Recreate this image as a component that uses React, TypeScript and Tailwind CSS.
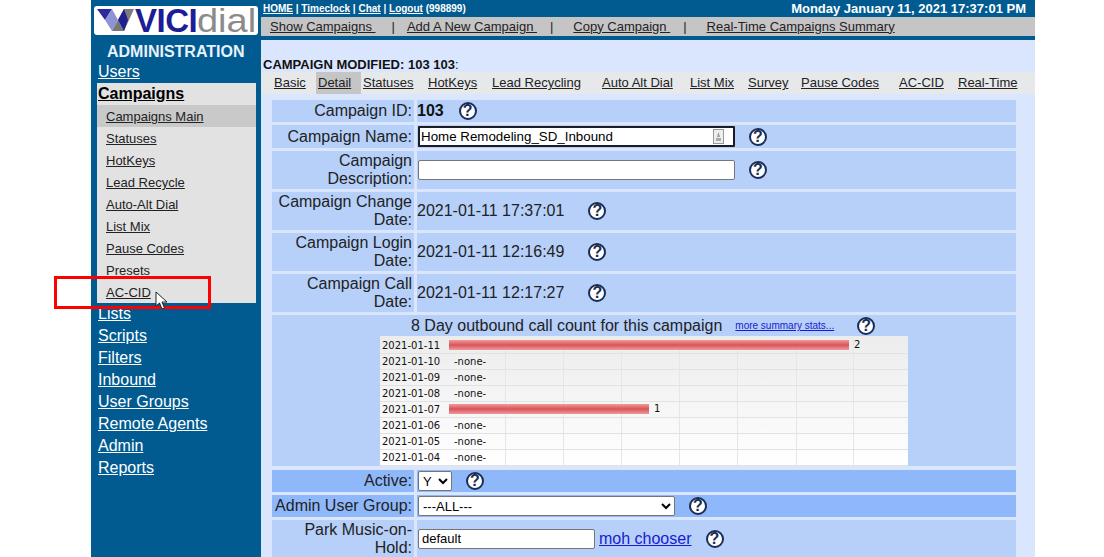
import React from "react";

const sans = "font-['Liberation_Sans',Arial,sans-serif]";

function Help({ className = "" }: { className?: string }) {
  return (
    <span className={`inline-flex h-[18px] w-[18px] shrink-0 items-center justify-center rounded-full border-2 border-[#1b2d55] bg-white text-[16px] font-bold leading-none text-[#1b2d55] ${className}`}>?</span>
  );
}

function Row({ label, h, dark, children }: { label: React.ReactNode; h: number; dark?: boolean; children: React.ReactNode }) {
  const bg = dark ? "bg-[#8fb8fa]" : "bg-[#b6d0fa]";
  return (
    <div className={`flex ${h === 38 ? "h-[38px]" : h === 23 ? "h-[23px]" : "h-[22px]"} gap-[3px]`}>
      <div className={`${bg} flex w-[142px] shrink-0 items-center justify-end text-right text-[16px] leading-[18px] text-[#222] pr-[2px]`}>
        <span>{label}</span>
      </div>
      <div className={`${bg} flex flex-1 items-center text-[16px]`}>{children}</div>
    </div>
  );
}

const side = ["Campaigns Main", "Statuses", "HotKeys", "Lead Recycle", "Auto-Alt Dial", "List Mix", "Pause Codes", "Presets", "AC-CID"];
const after = ["Lists", "Scripts", "Filters", "Inbound", "User Groups", "Remote Agents", "Admin", "Reports"];

const chart: { d: string; bar?: "full" | "half"; n?: number }[] = [
  { d: "2021-01-11", bar: "full", n: 2 },
  { d: "2021-01-10" },
  { d: "2021-01-09" },
  { d: "2021-01-08" },
  { d: "2021-01-07", bar: "half", n: 1 },
  { d: "2021-01-06" },
  { d: "2021-01-05" },
  { d: "2021-01-04" },
];

const tabs: { t: string; c: string }[] = [
  { t: "Basic", c: "ml-[13px] w-[32px]" },
  { t: "Detail", c: "ml-[10px] w-[45px] bg-[#c5c5c5] pl-[2px]" },
  { t: "Statuses", c: "ml-[2px] w-[50px]" },
  { t: "HotKeys", c: "ml-[15px] w-[49px]" },
  { t: "Lead Recycling", c: "ml-[15px] w-[89px]" },
  { t: "Auto Alt Dial", c: "ml-[21px] w-[71px]" },
  { t: "List Mix", c: "ml-[17px] w-[43px]" },
  { t: "Survey", c: "ml-[15px] w-[40px]" },
  { t: "Pause Codes", c: "ml-[13px] w-[77px]" },
  { t: "AC-CID", c: "ml-[21px] w-[45px]" },
  { t: "Real-Time", c: "ml-[14px] w-[59px]" },
];

export default function App() {
  return (
    <div className={`relative flex h-[557px] w-[1104px] overflow-hidden bg-white ${sans}`}>
      <div className="w-[91px] shrink-0" />
      {/* Sidebar */}
      <aside className="w-[170px] shrink-0 bg-[#015b91]">
        <div className="ml-[3px] mt-[6px] flex h-[29px] w-[164px] items-center rounded-[3px] bg-white">
          <svg width="41" height="29" viewBox="0 0 41 29" className="shrink-0">
            <polygon points="3,3 18,3 11,14" fill="#2a2a9c" />
            <polygon points="11,14 18,3 24,14 18,25" fill="#8d94d6" />
            <polygon points="18,25 24,14 30,25" fill="#777" />
            <polygon points="24,14 30,3 40,3 30,25" fill="#7d7d7d" />
            <polygon points="24,14 30,3 34,14 30,25" fill="#1f1f8e" />
          </svg>
          <span className="text-[33px] font-bold leading-[29px] tracking-[-0.5px] text-[#1d1d96]">VICI</span>
          <span className="inline-block origin-left scale-x-[1.15] text-[33px] leading-[29px] text-[#8b8b8b]">dial</span>
        </div>
        <div className="mt-[8px] pl-[16px] text-[16px] font-bold leading-[18px] text-[#e8f2fb]">ADMINISTRATION</div>
        <a className="block h-[22px] pl-[7px] text-[16px] leading-[22px] text-white underline">Users</a>
        <div className="ml-[6px] w-[159px] bg-[#e2e2e2]">
          <div className="h-[22px] pl-px text-[16px] font-bold leading-[22px] text-black underline">Campaigns</div>
          {side.map((s, i) => (
            <div key={s} className={`h-[22px] pl-[9px] text-[13px] leading-[24px] text-[#222] ${i === 0 ? "bg-[#c9c9c9]" : ""} ${s === "Presets" ? "" : "underline"}`}>{s}</div>
          ))}
        </div>
        {after.map((s) => (
          <a key={s} className="block h-[22px] pl-[7px] text-[16px] leading-[22px] text-white underline">{s}</a>
        ))}
      </aside>

      {/* Main */}
      <main className="w-[774px] shrink-0 bg-[#d9e6fe]">
        <div className="flex h-[17px] items-center justify-between bg-[#015b91] pl-[2px] pr-[9px] text-white">
          <div className="text-[10px] font-bold">
            <span className="underline">HOME</span> | <span className="underline">Timeclock</span> | <span className="underline">Chat</span> | <span className="underline">Logout</span> (998899)
          </div>
          <div className="text-[13px] font-bold">Monday January 11, 2021 17:37:01 PM</div>
        </div>
        <div className="flex h-[19px] items-center whitespace-pre bg-[#c5c5c5] pl-[9px] text-[13px] text-[#222]">
          <span className="underline">Show Campaigns </span>
          <span className="ml-[16px]">|</span>
          <span className="ml-[12px] underline">Add A New Campaign </span>
          <span className="ml-[13px]">|</span>
          <span className="ml-[20px] underline">Copy Campaign </span>
          <span className="ml-[13px]">|</span>
          <span className="ml-[20px] underline">Real-Time Campaigns Summary</span>
        </div>
        <div className="h-[4px] bg-[#015b91]" />
        <div className="mt-[17px] h-[15px] pl-[2px] text-[13px] font-bold leading-[15px] text-[#111]">
          CAMPAIGN MODIFIED: 103 103<span className="font-normal">:</span>
        </div>
        <div className="flex h-[22px] items-center whitespace-nowrap bg-[#e6e8ea] text-[13px] leading-[22px] text-[#222] underline">
          {tabs.map((t) => (
            <span key={t.t} className={`h-[22px] shrink-0 ${t.c}`}>{t.t}</span>
          ))}
        </div>

        <div className="ml-[11px] mt-[6px] flex w-[744px] flex-col gap-[3px] text-[#222]">
          <Row label="Campaign ID:" h={22}>
            <b className="text-[16px] text-[#111]">103</b>
            <Help className="ml-[15px]" />
          </Row>
          <Row label="Campaign Name:" h={23}>
            <div className="ml-px flex h-[21px] w-[317px] items-center rounded-[1px] border-2 border-[#1c1c24] bg-white pl-px pr-[9px] text-[13.33px] text-black">
              <span className="flex-1">Home Remodeling_SD_Inbound</span>
              <svg width="11" height="15" viewBox="0 0 11 15">
                <rect x="0.5" y="0.5" width="10" height="14" fill="#eee" stroke="#999" />
                <polygon points="5.5,3 7,8 4,8" fill="#999" />
                <rect x="3" y="9" width="5" height="3" fill="#aaa" />
              </svg>
            </div>
            <Help className="ml-[14px]" />
          </Row>
          <Row label={<>Campaign<br />Description:</>} h={38}>
            <input readOnly className="ml-px h-[20px] w-[317px] rounded-[2px] border border-[#767676] bg-white" />
            <Help className="ml-[14px]" />
          </Row>
          <Row label={<>Campaign Change<br />Date:</>} h={38}>
            2021-01-11 17:37:01
            <Help className="ml-[24px]" />
          </Row>
          <Row label={<>Campaign Login<br />Date:</>} h={38}>
            2021-01-11 12:16:49
            <Help className="ml-[24px]" />
          </Row>
          <Row label={<>Campaign Call<br />Date:</>} h={38}>
            2021-01-11 12:17:27
            <Help className="ml-[24px]" />
          </Row>

          {/* Chart block */}
          <div className="flex h-[151px] flex-col items-start bg-[#b6d0fa]">
            <div className="flex h-[21px] items-center pl-[139px]">
              <span className="text-[16px] text-[#222]">8 Day outbound call count for this campaign</span>
              <a className="ml-[13px] text-[10px] text-[#1a1ad0] underline">more summary stats...</a>
              <Help className="ml-[23px]" />
            </div>
            <div className="ml-[108px] w-[528px] bg-gradient-to-b from-[#ececec] to-white pt-[2px] font-['DejaVu_Sans',sans-serif] text-[10px] text-[#111]">
              {chart.map((r) => (
                <div key={r.d} className="relative flex h-[16px] items-center border-b border-[#e2e2e2]">
                  <span className="w-[67px] shrink-0 pl-[2px]">{r.d}</span>
                  <div className="flex h-full flex-1">
                    {[59, 58, 58, 58, 58, 59, 57, 54].map((w, i) => (
                      <div key={i} style={{ width: w }} className="h-full border-r border-[#e6e6e6] last:border-r-0" />
                    ))}
                  </div>
                  {r.bar ? (
                    <div className="absolute left-[69px] top-[2px] flex items-center">
                      <div className={`h-[10px] ${r.bar === "full" ? "w-[400px]" : "w-[200px]"} bg-gradient-to-b from-[#ef9a9a] via-[#d9525a] to-[#ef9a9a]`} />
                      <span className="ml-[5px] leading-[10px]">{r.n}</span>
                    </div>
                  ) : (
                    <span className="absolute left-[74px] top-[1px] leading-[14px]">-none-</span>
                  )}
                </div>
              ))}
            </div>
          </div>

          <div className="mt-px">
            <Row label="Active:" h={22} dark>
              <select className="ml-px h-[20px] w-[34px] rounded-[2px] border border-[#767676] bg-white text-[13px] text-black">
                <option>Y</option>
              </select>
              <Help className="ml-[14px]" />
            </Row>
          </div>
          <Row label="Admin User Group:" h={22} dark>
            <select className="ml-px h-[20px] w-[257px] rounded-[2px] border border-[#767676] bg-white text-[13px] text-black">
              <option>---ALL---</option>
            </select>
            <Help className="ml-[14px]" />
          </Row>
          <Row label={<>Park Music-on-<br />Hold:</>} h={38}>
            <div className="ml-px flex h-[20px] w-[177px] items-center rounded-[2px] border border-[#767676] bg-white pl-[3px] text-[13px] text-black">default</div>
            <a className="ml-[4px] text-[#1a1ad0] underline">moh chooser</a>
            <Help className="ml-[14px]" />
          </Row>
        </div>
      </main>

      {/* Red highlight over the menu */}
      <div className="absolute left-[54px] top-[276px] h-[33px] w-[157px] border-[3px] border-[#ff0000]" />
      {/* Mouse pointer */}
      <svg className="absolute left-[155px] top-[291px]" width="13" height="20" viewBox="0 0 13 20">
        <path d="M1 1 L1 15 L4.5 12 L7 18 L9.5 17 L7 11 L12 11 Z" fill="white" stroke="#222" strokeWidth="1" />
      </svg>
    </div>
  );
}
